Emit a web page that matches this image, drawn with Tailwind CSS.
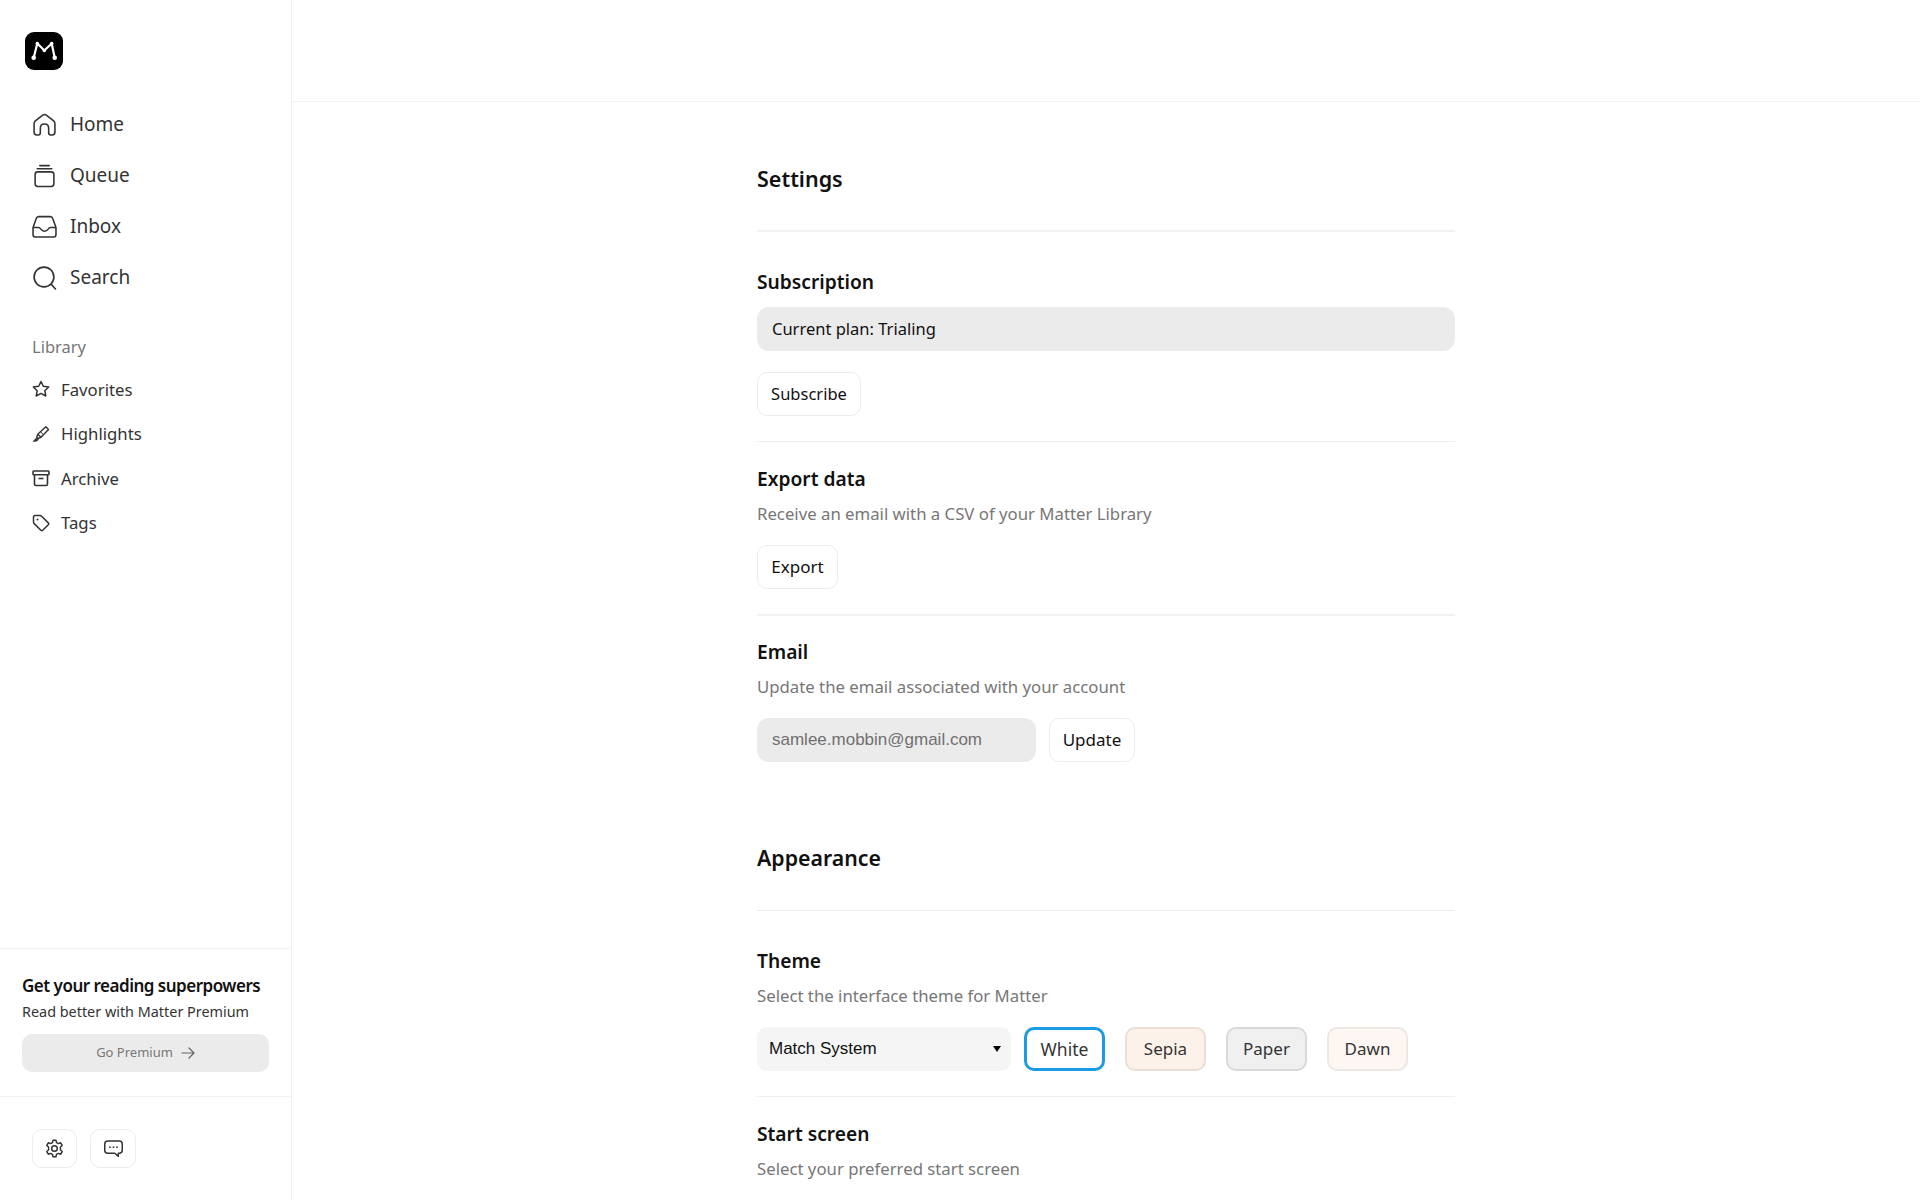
<!DOCTYPE html>
<html lang="en">
<head>
<meta charset="utf-8">
<title>Matter Settings</title>
<script src="https://cdn.jsdelivr.net/npm/@tailwindcss/browser@4"></script>
</head>
<body class="bg-white">
<div class="flex h-[1200px] w-[1920px] overflow-hidden font-['Noto_Sans',sans-serif] text-[#111]">
  <aside class="flex h-full w-[292px] shrink-0 flex-col border-r border-[#f0f0f0]">
    <div class="pl-[25px] pt-[32px]">
      <div class="flex size-[38px] items-center justify-center rounded-[9px] bg-black">
        <svg viewBox="0 0 38 38" class="size-[38px]" fill="none" stroke="#fff" stroke-width="2.200" stroke-linecap="round" stroke-linejoin="round"><path d="M8.700 25.700 L12.300 11.500 Q16 15 19.300 18.500 Q23 15 26.700 11.500 L29.700 25.700"/><circle cx="8.700" cy="25.700" r="2.300" fill="#fff" stroke="none"/><circle cx="29.700" cy="25.700" r="2.300" fill="#fff" stroke="none"/><circle cx="19.300" cy="18.500" r="1.800" fill="#fff" stroke="none"/><circle cx="12.300" cy="11.500" r="1.800" fill="#fff" stroke="none"/><circle cx="26.700" cy="11.500" r="1.800" fill="#fff" stroke="none"/></svg>
      </div>
    </div>
    <nav class="mt-[29px] flex flex-col pl-[32px] text-[19px] text-[#333]">
      <a class="flex h-[51px] items-center gap-[13px]">
        <svg viewBox="0 0 24 24" class="size-[25px]" fill="none" stroke="#333" stroke-width="1.500" stroke-linejoin="round"><path d="M2 11.200 Q2 9.600 3.200 8.600 L10 3.200 Q12 1.700 14 3.200 L20.800 8.600 Q22 9.600 22 11.200 V19.500 Q22 22 19.500 22 H18 Q16 22 16 20 V15.500 Q16 11.500 12 11.500 Q8 11.500 8 15.500 V20 Q8 22 6 22 H4.500 Q2 22 2 19.500 Z"/></svg>
        <span>Home</span>
      </a>
      <a class="flex h-[51px] items-center gap-[13px]">
        <svg viewBox="0 0 24 24" class="size-[25px]" fill="none" stroke="#333" stroke-width="1.500" stroke-linecap="round"><rect x="3" y="8.500" width="18" height="14" rx="2.500"/><path d="M5 5.500 H19 M7.500 2.500 H16.500"/></svg>
        <span>Queue</span>
      </a>
      <a class="flex h-[51px] items-center gap-[13px]">
        <svg viewBox="0 0 24 24" class="size-[25px]" fill="none" stroke="#333" stroke-width="1.500" stroke-linejoin="round"><path d="M6.500 2.500 H17.500 Q19.500 2.500 20 4.500 L23 13 V20 Q23 22 21 22 H3 Q1 22 1 20 V13 L4 4.500 Q4.500 2.500 6.500 2.500 Z"/><path d="M1 13 H6 Q7.500 13 8.500 14.500 Q10 16.500 12 16.500 Q14 16.500 15.500 14.500 Q16.500 13 18 13 H23"/></svg>
        <span>Inbox</span>
      </a>
      <a class="flex h-[51px] items-center gap-[13px]">
        <svg viewBox="0 0 24 24" class="size-[25px]" fill="none" stroke="#333" stroke-width="1.600" stroke-linecap="round"><circle cx="11.500" cy="11.500" r="9.500"/><path d="M18.500 18.500 L22.500 23"/></svg>
        <span>Search</span>
      </a>
    </nav>
    <div class="mt-[32px] pl-[32px] text-[16.5px] leading-[24px] text-[#777]">Library</div>
    <nav class="mt-[8px] flex flex-col pl-[32px] text-[16.75px] text-[#333]">
      <a class="flex h-[44.5px] items-center gap-[11px]">
        <svg viewBox="0 0 18 18" class="size-[18px]" fill="none" stroke="#333" stroke-width="1.500" stroke-linejoin="round"><path d="M9 1.500 L11.300 6.300 L16.700 7 L12.800 10.700 L13.800 16 L9 13.400 L4.200 16 L5.200 10.700 L1.300 7 L6.700 6.300 Z"/></svg>
        <span>Favorites</span>
      </a>
      <a class="flex h-[44.5px] items-center gap-[11px]">
        <svg viewBox="0 0 18 18" class="size-[18px]" fill="none" stroke="#333" stroke-width="1.400" stroke-linejoin="round"><path d="M13.800 1.800 L16.500 4.500 L9 12.300 L5.800 9.300 Z"/><path d="M8.500 6.800 L11.500 9.700" stroke-width="1"/><path d="M5.800 9.300 L4.800 12.300 L6 13.500 L9 12.300"/><path d="M4.300 13 L1.200 16.400 L5 16 L6.300 14.500 Z" fill="#333" stroke-width="0.800"/></svg>
        <span>Highlights</span>
      </a>
      <a class="flex h-[44.5px] items-center gap-[11px]">
        <svg viewBox="0 0 18 18" class="size-[18px]" fill="none" stroke="#333" stroke-width="1.600" stroke-linejoin="round"><rect x="1" y="2" width="16" height="3.800" rx="0.800"/><path d="M2.500 5.800 V15 Q2.500 16.500 4 16.500 H14 Q15.500 16.500 15.500 15 V5.800"/><path d="M6.500 9.500 H11.500"/></svg>
        <span>Archive</span>
      </a>
      <a class="flex h-[44.5px] items-center gap-[11px]">
        <svg viewBox="0 0 18 18" class="size-[18px]" fill="none" stroke="#333" stroke-width="1.500" stroke-linejoin="round"><path d="M1.500 3 Q1.500 1.500 3 1.500 H8 Q9 1.500 9.600 2.200 L16.300 8.900 Q17.200 9.800 16.300 10.700 L10.700 16.300 Q9.800 17.200 8.900 16.300 L2.200 9.600 Q1.500 9 1.500 8 Z"/><circle cx="5.500" cy="5.500" r="1" fill="#333" stroke="none"/></svg>
        <span>Tags</span>
      </a>
    </nav>
    <div class="mt-auto">
      <div class="border-y border-[#f2f2f2] px-[22px] pb-[24px] pt-[24px]">
        <div class="text-[17px] font-semibold leading-[26px] tracking-[-0.5px] text-[#111]">Get your reading superpowers</div>
        <div class="mt-[1px] text-[14.4px] leading-[24px] text-[#333]">Read better with Matter Premium</div>
        <div class="mt-[10px] flex h-[38px] w-[247px] items-center justify-center gap-[8px] rounded-[10px] bg-[#ebebeb] text-[13px] text-[#777]">
          <span>Go Premium</span>
          <svg viewBox="0 0 14 14" class="size-[14px]" fill="none" stroke="#666" stroke-width="1.200" stroke-linecap="round" stroke-linejoin="round"><path d="M1 7 H13 M8 2 L13 7 L8 12"/></svg>
        </div>
      </div>
      <div class="flex h-[103px] items-start gap-[13px] pl-[32px] pt-[32px]">
        <button class="flex h-[39px] w-[45px] items-center justify-center rounded-[10px] border border-[#ececec] bg-white">
          <svg viewBox="0 0 24 24" class="size-[21px]" fill="none" stroke="#333" stroke-width="1.700" stroke-linejoin="round"><circle cx="12" cy="12" r="3.200"/><path d="M10.300 2.500 H13.700 L14.300 5.200 L16.500 6.400 L19.100 5.500 L20.800 8.500 L18.800 10.300 V13.700 L20.800 15.500 L19.100 18.500 L16.500 17.600 L14.300 18.800 L13.700 21.500 H10.300 L9.700 18.800 L7.500 17.600 L4.900 18.500 L3.200 15.500 L5.200 13.700 V10.300 L3.200 8.500 L4.900 5.500 L7.500 6.400 L9.700 5.200 Z"/></svg>
        </button>
        <button class="flex h-[39px] w-[46px] items-center justify-center rounded-[10px] border border-[#ececec] bg-white">
          <svg viewBox="0 0 24 24" class="size-[21px]" fill="none" stroke="#333" stroke-width="1.700" stroke-linejoin="round"><path d="M5.500 3.500 H18.500 Q22 3.500 22 7 V14 Q22 17.500 18.500 17.500 H17.500 V21 L13.500 17.500 H5.500 Q2 17.500 2 14 V7 Q2 3.500 5.500 3.500 Z"/><circle cx="8" cy="10.500" r="1" fill="#333" stroke="none"/><circle cx="12" cy="10.500" r="1" fill="#333" stroke="none"/><circle cx="16" cy="10.500" r="1" fill="#333" stroke="none"/></svg>
        </button>
      </div>
    </div>
  </aside>
  <main class="flex-1">
    <div class="h-[102px] border-b border-[#f2f2f2]"></div>
    <div class="mx-auto w-[698px]">
      <div class="border-b-2 border-[#f2f2f2] pb-[36px] pt-[62px]">
        <h1 class="text-[21.5px] font-semibold leading-[30px] text-[#111]">Settings</h1>
      </div>
      <section class="border-b border-[#f0f0f0] pb-[25px] pt-[36px]">
        <h2 class="text-[19.2px] font-semibold leading-[28px]">Subscription</h2>
        <div class="mt-[11px] flex h-[44px] items-center rounded-[12px] bg-[#ebebeb] px-[15px] text-[16.5px] text-[#111]">Current plan: Trialing</div>
        <button class="mt-[21px] flex h-[44px] w-[104px] items-center justify-center rounded-[10px] border border-[#ececec] bg-white text-[16.5px] text-[#111]">Subscribe</button>
      </section>
      <section class="border-b-2 border-[#f2f2f2] pb-[25px] pt-[23px]">
        <h2 class="text-[19.2px] font-semibold leading-[28px]">Export data</h2>
        <p class="mt-[9px] text-[16.75px] leading-[24px] text-[#777]">Receive an email with a CSV of your Matter Library</p>
        <button class="mt-[19px] flex h-[44px] w-[81px] items-center justify-center rounded-[10px] border border-[#ececec] bg-white text-[17px] text-[#111]">Export</button>
      </section>
      <section class="pt-[22px]">
        <h2 class="text-[19.2px] font-semibold leading-[28px]">Email</h2>
        <p class="mt-[9px] text-[16.75px] leading-[24px] text-[#777]">Update the email associated with your account</p>
        <div class="mt-[19px] flex gap-[13px]">
          <div class="flex h-[44px] w-[279px] items-center rounded-[12px] bg-[#ebebeb] px-[15px] font-['Liberation_Sans',sans-serif] text-[17px] text-[#707070]">samlee.mobbin@gmail.com</div>
          <button class="flex h-[44px] w-[86px] items-center justify-center rounded-[10px] border border-[#ececec] bg-white text-[17px] text-[#111]">Update</button>
        </div>
      </section>
      <div class="mt-[80px] border-b border-[#ececec] pb-[36px]">
        <h1 class="text-[21.3px] font-semibold leading-[32px] text-[#111]">Appearance</h1>
      </div>
      <section class="border-b border-[#f0f0f0] pb-[25px] pt-[36px]">
        <h2 class="text-[19.2px] font-semibold leading-[28px]">Theme</h2>
        <p class="mt-[9px] text-[16.75px] leading-[24px] text-[#777]">Select the interface theme for Matter</p>
        <div class="mt-[19px] flex items-center">
          <div class="flex h-[44px] w-[254px] items-center justify-between rounded-[10px] bg-[#f5f5f5] pl-[12px] pr-[10px] font-['Liberation_Sans',sans-serif] text-[17px] text-[#111]">
            <span>Match System</span>
            <span class="h-0 w-0 border-x-[4px] border-t-[6px] border-x-transparent border-t-black"></span>
          </div>
          <button class="ml-[13px] flex h-[44px] w-[81px] items-center justify-center rounded-[10px] border-[3px] border-[#1a9be6] bg-white text-[17.5px] text-[#333]">White</button>
          <button class="ml-[20px] flex h-[44px] w-[81px] items-center justify-center rounded-[10px] border-2 border-[#eadfd5] bg-[#fdf2e9] text-[17px] text-[#333]">Sepia</button>
          <button class="ml-[20px] flex h-[44px] w-[81px] items-center justify-center rounded-[10px] border-2 border-[#d9d9d9] bg-[#f0f0f0] text-[17px] text-[#333]">Paper</button>
          <button class="ml-[20px] flex h-[44px] w-[81px] items-center justify-center rounded-[10px] border-2 border-[#efe7e2] bg-[#fdf6f2] text-[17px] text-[#333]">Dawn</button>
        </div>
      </section>
      <section class="pt-[23px]">
        <h2 class="text-[19.2px] font-semibold leading-[28px]">Start screen</h2>
        <p class="mt-[9px] text-[16.75px] leading-[24px] text-[#777]">Select your preferred start screen</p>
      </section>
    </div>
  </main>
</div>
</body>
</html>
